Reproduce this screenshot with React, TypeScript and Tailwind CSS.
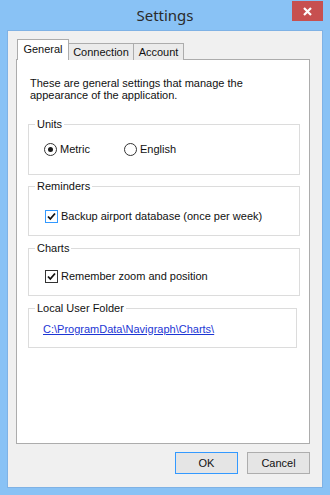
import React from "react";

const font = { fontFamily: '"Liberation Sans", Arial, sans-serif' };

function Radio({ checked }: { checked?: boolean }) {
  return (
    <span className="flex h-[13px] w-[13px] items-center justify-center rounded-full border border-[#333333] bg-white">
      {checked && <span className="h-[5px] w-[5px] rounded-full bg-[#1a1a1a]" />}
    </span>
  );
}

function Check({ focused }: { focused?: boolean }) {
  return (
    <span
      className={
        "flex h-[13px] w-[13px] items-center justify-center border bg-white " +
        (focused ? "border-[#3399ff]" : "border-[#333333]")
      }
    >
      <svg width="9" height="9" viewBox="0 0 9 9">
        <path d="M1 4.5 L3.3 7 L8 1.5" fill="none" stroke="#111" strokeWidth="1.8" />
      </svg>
    </span>
  );
}

function Group({
  title,
  className,
  children,
}: {
  title: string;
  className: string;
  children: React.ReactNode;
}) {
  return (
    <div className={"relative border border-[#dcdcdc] " + className}>
      <span className="absolute -top-[7px] left-[6px] bg-white px-[2px] leading-[13px]">{title}</span>
      {children}
    </div>
  );
}

export default function App() {
  return (
    <div
      className="flex h-[495px] w-[330px] flex-col bg-[#89c2f5] text-[11px] text-[#111111]"
      style={font}
    >
      <div className="relative flex h-[30px] shrink-0 items-center justify-center">
        <span
          className="text-[15px] leading-[20px] text-[#2b2b2b]"
          style={{ fontFamily: '"Noto Sans", "Open Sans", sans-serif' }}
        >
          Settings
        </span>
        <div className="absolute right-[7px] top-[1px] flex h-[20px] w-[31px] items-center justify-center bg-[#c75050]">
          <svg width="9" height="9" viewBox="0 0 9 9">
            <path d="M1 1 L8 8 M8 1 L1 8" stroke="#ffffff" strokeWidth="2.2" />
          </svg>
        </div>
      </div>
      <div className="mx-[7px] mb-[7px] flex h-[458px] flex-col border border-[#7fb2e5] bg-[#f0f0f0]">
        <div className="ml-[8px] mt-[8px] flex w-[294px] flex-col">
          <div className="relative z-10 flex h-[21px] items-end pl-[1px]">
            <div className="flex h-[21px] w-[52px] items-start justify-center border border-b-0 border-[#acacac] bg-white pt-[3px] leading-[13px]">
              General
            </div>
            <div className="flex h-[17px] w-[65px] items-start justify-center border border-b-0 border-l-0 border-[#acacac] bg-[#ebebeb] pt-[2px] leading-[13px]">
              Connection
            </div>
            <div className="flex h-[17px] w-[50px] items-start justify-center border border-b-0 border-l-0 border-[#acacac] bg-[#ebebeb] pt-[2px] leading-[13px]">
              Account
            </div>
          </div>
          <div className="-mt-px flex h-[385px] flex-col border border-[#acacac] bg-white pl-[11px]">
            <p className="ml-[2px] mt-[17px] leading-[12px]">
              These are general settings that manage the
              <br />
              appearance of the application.
            </p>
            <Group title="Units" className="mt-[23px] h-[51px] w-[272px]">
              <div className="flex items-center pl-[15px] pt-[18px]">
                <div className="flex w-[80px] items-center gap-[3px]">
                  <Radio checked />
                  <span className="leading-[13px]">Metric</span>
                </div>
                <div className="flex items-center gap-[3px]">
                  <Radio />
                  <span className="leading-[13px]">English</span>
                </div>
              </div>
            </Group>
            <Group title="Reminders" className="mt-[11px] h-[50px] w-[272px]">
              <div className="flex items-center gap-[3px] pl-[16px] pt-[23px]">
                <Check focused />
                <span className="leading-[13px]">Backup airport database (once per week)</span>
              </div>
            </Group>
            <Group title="Charts" className="mt-[12px] h-[48px] w-[272px]">
              <div className="flex items-center gap-[3px] pl-[16px] pt-[21px]">
                <Check />
                <span className="leading-[13px]">Remember zoom and position</span>
              </div>
            </Group>
            <Group title="Local User Folder" className="mt-[12px] h-[40px] w-[269px]">
              <div className="pl-[14px] pt-[14px] leading-[13px]">
                <span className="text-[#1c36d4] underline">C:\ProgramData\Navigraph\Charts\</span>
              </div>
            </Group>
          </div>
        </div>
        <div className="mr-[12px] mt-[8px] flex justify-end gap-[9px]">
          <button className="h-[22px] w-[63px] border border-[#3399ff] bg-[#e5e5e5] text-[11px] leading-[13px]">
            OK
          </button>
          <button className="h-[22px] w-[63px] border border-[#adadad] bg-[#e5e5e5] text-[11px] leading-[13px]">
            Cancel
          </button>
        </div>
      </div>
    </div>
  );
}
